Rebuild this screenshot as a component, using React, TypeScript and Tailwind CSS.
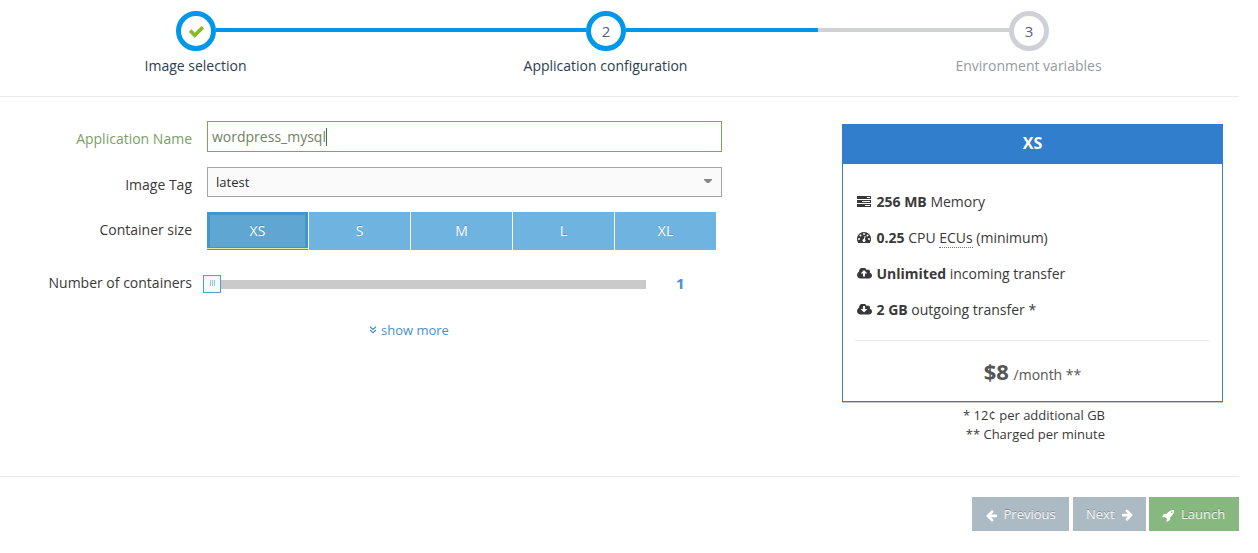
import type { ReactNode } from "react";

const CHECK =
  "M1671 566q0 40-28 68l-724 724-136 136q-28 28-68 28t-68-28l-136-136-362-362q-28-28-28-68t28-68l136-136q28-28 68-28t68 28l294 295 656-657q28-28 68-28t68 28l136 136q28 28 28 68z";
const ARROW =
  "M1664 896v128q0 53-32.5 90.5t-84.5 37.5h-704l293 294q38 36 38 90t-38 90l-75 76q-37 37-90 37-52 0-91-37l-651-652q-37-37-37-90 0-52 37-91l651-650q38-38 91-38 52 0 90 38l75 74q38 38 38 91t-38 91l-293 293h704q52 0 84.5 37.5t32.5 90.5z";
const ROCKET =
  "M1440 448q0-40-28-68t-68-28-68 28-28 68 28 68 68 28 68-28 28-68zm224-288q0 249-75.5 430.5t-253.5 360.5q-81 80-195 176l-20 379q-2 16-16 26l-384 224q-7 4-16 4-12 0-23-9l-64-64q-13-14-8-32l85-276-281-281-276 85q-3 1-9 1-14 0-23-9l-64-64q-17-19-5-39l224-384q10-14 26-16l379-20q96-114 176-195 188-187 358-258t431-71q14 0 24 9.5t10 22.5z";
const CLOUD =
  "M1984 1152q0 159-112.5 271.5t-271.5 112.5h-1088q-185 0-316.5-131.5t-131.5-316.5q0-130 70-240t188-165q-2-30-2-43 0-212 150-362t362-150q156 0 285.5 87t188.5 231q71-62 166-62 106 0 181 75t75 181q0 76-41 138 130 31 213.5 135.5t83.5 238.5z";
const UP =
  "M1344 864q0-14-9-23l-352-352q-9-9-23-9t-23 9l-351 351q-10 12-10 24 0 14 9 23t23 9h224v352q0 13 9.5 22.5t22.5 9.5h192q13 0 22.5-9.5t9.5-22.5v-352h224q13 0 22.5-9.5t9.5-22.5z";

function Servers() {
  return (
    <svg viewBox="0 0 14 11" className="h-[11px] w-[14px]" fill="currentColor" shapeRendering="crispEdges">
      <path d="M0 0h14v3H0zM0 4h14v3H0zM0 8h14v3H0z" />
      <path d="M10 1h3v1h-3zM5 5h8v1H5zM8 9h5v1H8z" fill="#fff" />
    </svg>
  );
}

function Gauge() {
  return (
    <svg viewBox="0 256 1792 1408" className="h-[11px] w-[14px]" fill="currentColor">
      <path d="M1792 1152q0 261-141 483-19 29-54 29h-1402q-35 0-54-29-141-221-141-483 0-182 71-348t191-286 286-191 348-71 348 71 286 191 191 286 71 348z" />
      <g fill="#fff">
        <circle cx="256" cy="1152" r="128" />
        <circle cx="448" cy="704" r="128" />
        <circle cx="896" cy="512" r="128" />
        <circle cx="1344" cy="704" r="128" />
        <circle cx="1536" cy="1152" r="128" />
        <path d="M1004 1185l101-382q6-26-7.5-48.5t-38.5-29.5-48 6.5-30 39.5l-101 382q-60 5-107 43.5t-63 98.5q-20 77 20 146t117 89 146-20 89-117q16-60-6-117t-72-91z" />
      </g>
    </svg>
  );
}

function Cloud({ down = false }: { down?: boolean }) {
  return (
    <svg viewBox="64 256 1920 1280" className="h-[11px] w-[15px]" fill="currentColor">
      <path d={CLOUD} />
      <path d={UP} fill="#fff" transform={down ? "rotate(180 960 864)" : undefined} />
    </svg>
  );
}

function Step({ label, done, tone, children }: { label: string; done: boolean; tone: string; children: ReactNode }) {
  return (
    <div className="flex w-10 shrink-0 flex-col items-center">
      <div
        className={`flex size-10 items-center justify-center rounded-full border-[5px] bg-white text-[15px] leading-none text-[#546474] ${done ? "border-[#0197e8]" : "border-[#ced1d6]"}`}
      >
        {children}
      </div>
      <div className={`mt-[5px] text-[14px] leading-5 whitespace-nowrap ${tone}`}>{label}</div>
    </div>
  );
}

function Label({ className, children }: { className: string; children: ReactNode }) {
  return <div className={`w-[192px] shrink-0 text-right text-[14px] leading-5 ${className}`}>{children}</div>;
}

function Feature({ icon, children }: { icon: ReactNode; children: ReactNode }) {
  return (
    <li className="flex h-9 items-center">
      <span className="flex w-[19.5px] shrink-0 items-center">{icon}</span>
      <span className="whitespace-nowrap">{children}</span>
    </li>
  );
}

const sizes = ["XS", "S", "M", "L", "XL"];
const buttonText = "flex h-[34px] items-center pt-[2px] text-[13px] text-white/90 [text-shadow:0_-1px_0_rgba(0,0,0,0.25)]";

export default function App() {
  return (
    <div className="h-[553px] w-[1258px] overflow-hidden bg-white font-['Open_Sans',sans-serif] text-[#393939]">
      <div className="w-[1239px]">
        <header className="flex h-[97px] items-start border-b border-[#ebebeb] pt-[11px] pl-[176px]">
          <Step label="Image selection" done tone="text-[#2b3d53] -ml-px">
            <svg viewBox="0 0 1792 1792" className="size-[17px]" fill="#87ba21">
              <path d={CHECK} />
            </svg>
          </Step>
          <div className="mt-[17px] h-1 w-[370px] bg-[#0197e8]" />
          <Step label="Application configuration" done tone="text-[#2b3d53] -ml-px">
            2
          </Step>
          <div className="mt-[17px] h-1 w-[192px] bg-[#0197e8]" />
          <div className="mt-[17px] h-1 w-[191px] bg-[#ced1d6]" />
          <Step label="Environment variables" done={false} tone="text-[#939ba2] -ml-px">
            3
          </Step>
        </header>

        <main className="flex h-[379px]">
          <form className="w-[842px] shrink-0 pt-6" onSubmit={(e) => e.preventDefault()}>
            <div className="flex h-[46px] items-start">
              <Label className="pt-2 text-[#7ba065]">Application Name</Label>
              <div className="ml-[15px] flex h-[31px] w-[515px] items-center border border-[#7ba65b] pl-1 text-[14px] text-[#6f8260]">
                wordpress_mysql
                <span className="h-[18px] w-px bg-[#4d6b3c]" />
              </div>
            </div>
            <div className="flex h-[45px] items-start">
              <Label className="pt-2">Image Tag</Label>
              <div className="ml-[15px] flex h-[30px] w-[515px] items-center justify-between border border-[#a5a5a5] bg-[#fafafa] pr-[9px] pl-2 text-[13px] text-[#2c2c2c]">
                <span className="pt-[2px]">latest</span>
                <svg viewBox="0 0 8 4" className="mb-[2px] h-1 w-2" fill="#888">
                  <path d="M0 0h8v1L5 4H3L0 1z" />
                </svg>
              </div>
            </div>
            <div className="flex h-[61px] items-start">
              <Label className="pt-2">Container size</Label>
              <div className="ml-[15px] flex gap-px">
                {sizes.map((s, i) => (
                  <button
                    key={s}
                    type="button"
                    className={`flex h-[38px] w-[101px] items-center justify-center pb-[2px] text-[14px] text-white [text-shadow:0_-1px_0_rgba(0,0,0,0.2)] ${
                      i === 0
                        ? "bg-[#5fa6d3] shadow-[inset_0_-1px_0_#4396cb,inset_0_-2px_0_#e8e8a0,inset_0_0_0_3px_#4396cb]"
                        : "bg-[#6fb3e0]"
                    }`}
                  >
                    {s}
                  </button>
                ))}
              </div>
            </div>
            <div className="flex h-[47px] items-start">
              <Label className="">Number of containers</Label>
              <div className="ml-[11px] flex h-[22px] w-[443px] items-center">
                <div className="flex size-[18px] items-center justify-center gap-px border border-[#4aa3ce] bg-[#f8f8f8] pb-[2px]">
                  <span className="h-[6px] w-[1px] bg-[#8bcbe2]" />
                  <span className="h-[6px] w-[1px] bg-[#8bcbe2]" />
                  <span className="h-[6px] w-[1px] bg-[#8bcbe2]" />
                </div>
                <div className="mt-[1px] h-[9px] flex-1 bg-[#cacaca]" />
              </div>
              <div className="ml-[30px] text-[15px] leading-5 font-bold text-[#478fca]">1</div>
            </div>
            <div className="ml-[369px] flex items-center text-[13px] leading-5 text-[#478fca]">
              <svg viewBox="0 0 8 8" className="mr-1 size-2" fill="none" stroke="currentColor" strokeWidth="1.2">
                <path d="M1 .7l3 2.8L7 .7M1 4l3 2.8L7 4" />
              </svg>
              show more
            </div>
          </form>

          <aside className="w-[381px] pt-[27px]">
            <section className="h-[278px] border border-[#307ecc] border-t-0 shadow-[0_1px_0_#c8c8c8]">
              <h2 className="-mx-px flex h-10 items-center justify-center bg-[#307ecc] pb-[2px] text-[16px] font-bold text-white">XS</h2>
              <div className="px-3 pt-[19px]">
                <ul className="h-[157px] pl-[2px] text-[14px]">
                  <Feature icon={<Servers />}><b>256 MB</b> Memory</Feature>
                  <Feature icon={<Gauge />}>
                    <b>0.25</b> CPU <abbr className="border-b border-dotted border-[#777] no-underline">ECUs</abbr> (minimum)
                  </Feature>
                  <Feature icon={<Cloud />}><b>Unlimited</b> incoming transfer</Feature>
                  <Feature icon={<Cloud down />}><b>2 GB</b> outgoing transfer *</Feature>
                </ul>
                <div className="border-t border-[#ebebeb] pt-[14px] text-center text-[14px] leading-8 text-[#555]">
                  <b className="text-[22px]">$8</b> <span className="ml-px">/month **</span>
                </div>
              </div>
            </section>
            <div className="w-[263px] pt-[4px] text-right text-[13px] leading-[19px]">
              <p>* 12¢ per additional GB</p>
              <p>** Charged per minute</p>
            </div>
          </aside>
        </main>

        <footer className="flex justify-end border-t border-[#ebebeb] pt-5">
          <button type="button" className={`${buttonText} mr-1 w-[97px] bg-[#abbac3] pl-[13px]`}>
            <svg viewBox="0 0 1792 1792" className="mr-[5.5px] size-[13px] fill-white">
              <path d={ARROW} />
            </svg>
            Previous
          </button>
          <button type="button" className={`${buttonText} mr-[3px] w-[73px] bg-[#abbac3] pl-[13px]`}>
            Next
            <svg viewBox="0 0 1792 1792" className="ml-[6px] size-[13px] rotate-180 fill-white">
              <path d={ARROW} />
            </svg>
          </button>
          <button type="button" className={`${buttonText} w-[90px] bg-[#87b87f] pl-[13px]`}>
            <svg viewBox="0 0 1792 1792" className="mr-[6px] size-[13px] fill-white">
              <path d={ROCKET} />
            </svg>
            Launch
          </button>
        </footer>
      </div>
    </div>
  );
}
